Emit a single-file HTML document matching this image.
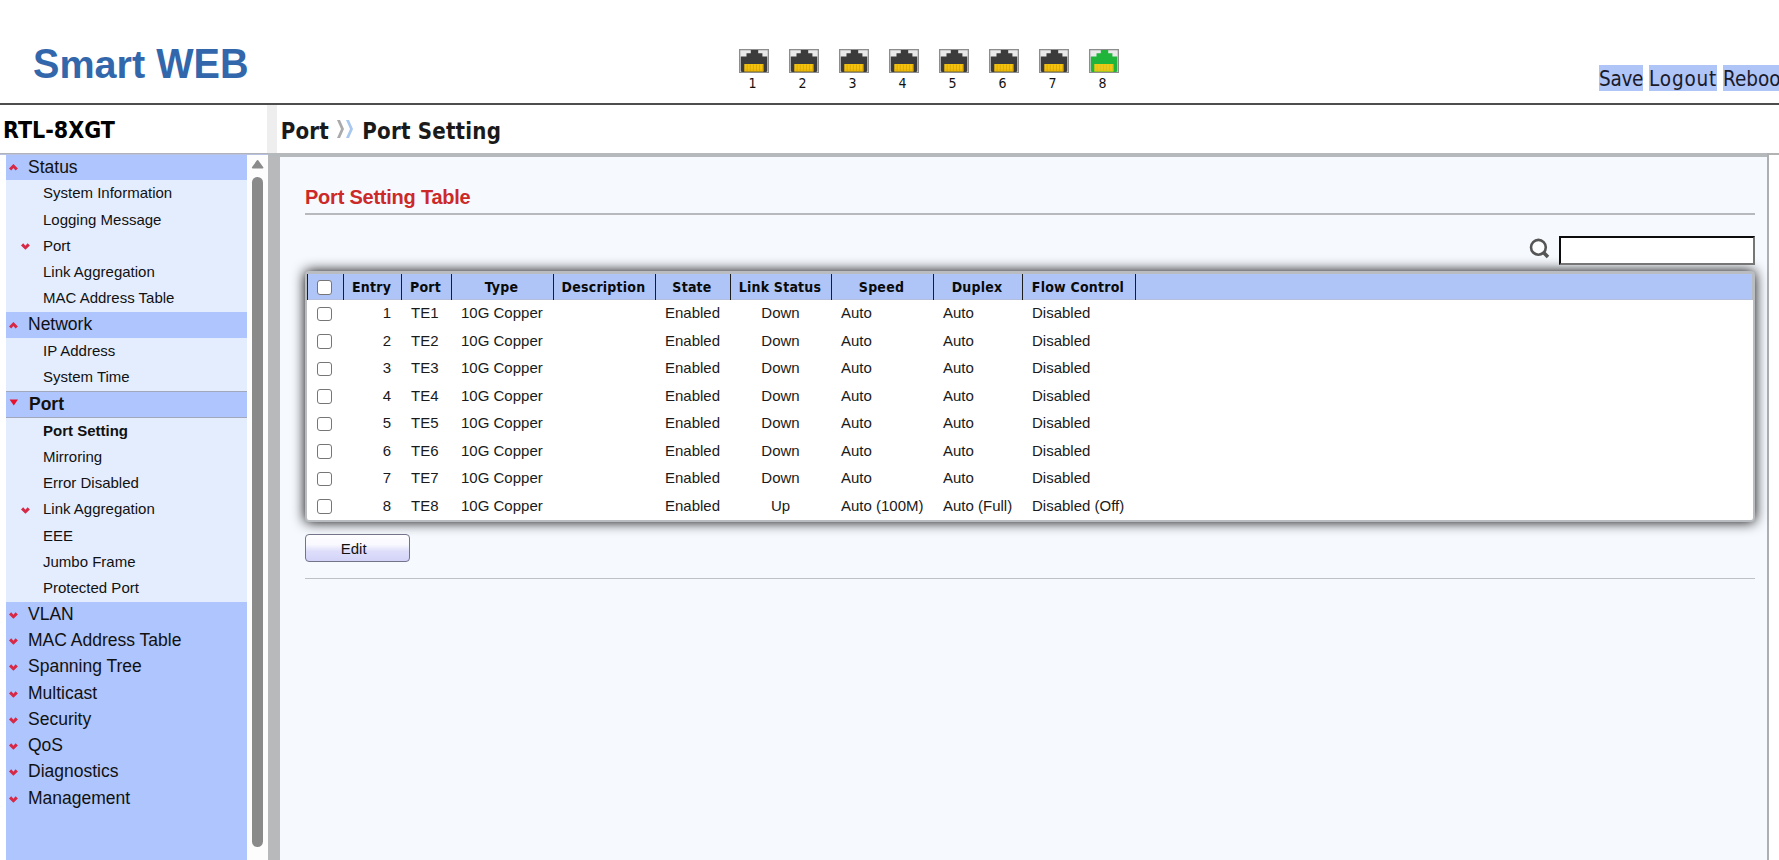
<!DOCTYPE html>
<html><head><meta charset="utf-8"><title>Port Setting</title>
<style>
html,body{margin:0;padding:0;}
body{width:1779px;height:860px;overflow:hidden;position:relative;background:#fff;font-family:"Liberation Sans",Arial,sans-serif;color:#111;}
.abs{position:absolute;}
.seg{font-family:"DejaVu Sans Condensed","DejaVu Sans","Liberation Sans",sans-serif;}
#logo{left:33px;top:41px;font-size:39.6px;font-weight:bold;color:#3367ab;line-height:46px;white-space:nowrap;}
#logo .cp{display:inline-block;transform:scaleY(1.075);transform-origin:0 36.7px;}
#hline{left:0;top:103px;width:1779px;height:2px;background:#4d4d4d;}
.pt{position:absolute;top:49px;width:30px;height:24px;}
.pn{position:absolute;top:74.1px;width:30px;text-align:center;font-size:14px;line-height:18px;color:#111;margin-left:0.5px;}
#links a{display:block;text-decoration:none;position:absolute;top:65px;height:26px;line-height:29.6px;overflow:hidden;font-size:20.5px;background:#afc4f7;color:#1a1a2a;white-space:nowrap;}
#model{left:3px;top:112.9px;font-size:23px;font-weight:bold;line-height:34px;color:#000;}
#crumb{left:280.7px;top:113.5px;font-size:22.1px;letter-spacing:0.2px;font-weight:bold;line-height:34px;color:#1a1a1a;white-space:nowrap;}

#sideline{left:0;top:153px;width:268px;height:2px;background:linear-gradient(#b0b4ba 0%,#b0b4ba 50%,#b8c2e0 50%,#b8c2e0 100%);z-index:3;}
#side{left:6px;top:154px;width:241px;height:706px;background:#afc5fd;overflow:hidden;}
.m{height:26.3px;line-height:25.5px;font-size:17.5px;padding-left:22px;position:relative;background:#afc5fd;color:#111;white-space:nowrap;}
.s{height:26.3px;line-height:26.3px;font-size:15px;padding-left:37px;position:relative;background:#e4edfe;color:#111;white-space:nowrap;}
.m.act{height:26.9px;line-height:27.2px;font-weight:bold;box-shadow:inset 0 1px 0 #a2a8bb, inset 0 -1px 0 #a2a8bb;padding-left:23px;}
.s.act{font-weight:bold;}
.m svg{position:absolute;left:3px;top:10px;}
.m.act svg{top:8.7px;left:3.4px;}
.s svg{position:absolute;left:15px;top:10.5px;}
#sbar{left:247px;top:154px;width:21px;height:706px;background:#fdfdfd;}
#sbar .up{position:absolute;left:3px;top:4px;}
#sbar .th{position:absolute;left:5px;top:23px;width:11px;height:670px;border-radius:6px;background:#8a8a8a;}
#split1{left:267px;top:105px;width:10px;height:48px;background:#eeeeee;}
#split2{left:268px;top:157px;width:12px;height:703px;background:#b8b9bb;}

#ptop{left:268px;top:153px;width:1501px;height:4px;background:#b5b9bc;}
#ptop2{left:1769px;top:153px;width:10px;height:2px;background:#b3b3b3;}
#pright{left:1767px;top:153px;width:2px;height:707px;background:#aeafb1;}
#panel{left:280px;top:157px;width:1487px;height:703px;background:#f6f9fe;}
#ttl{left:305px;top:184px;font-size:20px;letter-spacing:-0.23px;font-weight:bold;color:#cc2929;line-height:26px;white-space:nowrap;}
#hr1{left:305px;top:213px;width:1450px;height:2px;background:#b7b9bc;}
#hr2{left:305px;top:578px;width:1450px;height:1px;background:#bfc1c4;}
#sic{left:1528px;top:237px;z-index:2;}
#sin{z-index:2;box-sizing:content-box;margin:0;padding:0;outline:0;border-radius:0;font:inherit;left:1559px;top:236px;width:192px;height:25px;background:#fff;border-style:solid;border-width:2px;border-color:#0c0c0c #767676 #767676 #0c0c0c;}
#tbl{left:305px;top:271px;width:1446px;height:246px;background:#fff;border:2px solid #b9bcc0;border-top-width:3px;border-radius:4px;box-shadow:0 0 12.5px #000;}
#tbl table{border-collapse:separate;border-spacing:0;table-layout:fixed;width:1446px;margin:0;}
#tbl th{box-sizing:border-box;height:26px;padding:0.8px 2px 0 0;line-height:25px;border-left:1px solid #1d1d1d;background:#afc5f8;box-shadow:inset 0 -1px 0 #b3bfdc;font-family:"DejaVu Sans Condensed","DejaVu Sans","Liberation Sans",sans-serif;font-weight:bold;font-size:14px;letter-spacing:0.22px;color:#0a0a0a;text-align:center;white-space:nowrap;vertical-align:top;overflow:hidden;}
#tbl th:last-child{border-right:1px solid #b9bcc0;}
#tbl td{box-sizing:border-box;height:27.5px;padding:0 0 0 10px;line-height:26.3px;font-size:15px;color:#1a1a1a;text-align:left;white-space:nowrap;vertical-align:top;overflow:hidden;}
#tbl td.c{padding:0;text-align:center;}
#tbl td.rt{padding:0 10px 0 0;text-align:right;}
#tbl td.k,#tbl th:first-child{padding:0;}
.cb{-webkit-appearance:none;appearance:none;display:block;box-sizing:content-box;width:12.7px;height:12.7px;margin:6.5px 0 0 10px;border:1px solid #767676;border-radius:3px;background:#fff;}
.cb.hc{margin:6px 0 0 9px;}
#edit{margin:0;font-family:inherit;cursor:pointer;left:305px;top:534px;width:103px;height:26px;border:1px solid #73738a;border-radius:4px;background:linear-gradient(#fefeff 0%,#f8f8ff 38%,#dedefb 62%,#d3d3f8 100%);font-size:15px;line-height:27.4px;text-align:center;color:#111;box-sizing:border-box;padding:0.4px 7.6px 0 0;width:105px;height:28px;}
</style></head><body>
<div id="logo" class="abs"><span class="cp">S</span>mart <span class="cp">WEB</span></div>
<svg class="pt" style="left:739px" width="30" height="24" viewBox="0 0 30 24"><rect x="0" y="0" width="30" height="24" fill="#8d8d8d"/><rect x="1.3" y="1.3" width="27.4" height="21.6" fill="#e9e9e9"/><path d="M11.8 1 H19.2 V4.2 H23.4 V7.5 H28.2 V21.5 Q28.2 23 26.7 23 H3.3 Q1.8 23 1.8 21.5 V7.5 H7.5 V4.2 H11.8z" fill="#3b3b3b"/><rect x="5.3" y="15" width="19.2" height="7.6" fill="#f2c20f"/><rect x="7.7" y="15.6" width="0.9" height="6.4" fill="#e0a800"/><rect x="10.8" y="15.6" width="0.9" height="6.4" fill="#e0a800"/><rect x="13.9" y="15.6" width="0.9" height="6.4" fill="#e0a800"/><rect x="17.0" y="15.6" width="0.9" height="6.4" fill="#e0a800"/><rect x="20.1" y="15.6" width="0.9" height="6.4" fill="#e0a800"/><rect x="23.2" y="15.6" width="0.9" height="6.4" fill="#e0a800"/><rect x="5.3" y="20.6" width="19.2" height="0.8" fill="#e0a800" opacity=".7"/></svg><div class="pn seg" style="left:737px">1</div>
<svg class="pt" style="left:789px" width="30" height="24" viewBox="0 0 30 24"><rect x="0" y="0" width="30" height="24" fill="#8d8d8d"/><rect x="1.3" y="1.3" width="27.4" height="21.6" fill="#e9e9e9"/><path d="M11.8 1 H19.2 V4.2 H23.4 V7.5 H28.2 V21.5 Q28.2 23 26.7 23 H3.3 Q1.8 23 1.8 21.5 V7.5 H7.5 V4.2 H11.8z" fill="#3b3b3b"/><rect x="5.3" y="15" width="19.2" height="7.6" fill="#f2c20f"/><rect x="7.7" y="15.6" width="0.9" height="6.4" fill="#e0a800"/><rect x="10.8" y="15.6" width="0.9" height="6.4" fill="#e0a800"/><rect x="13.9" y="15.6" width="0.9" height="6.4" fill="#e0a800"/><rect x="17.0" y="15.6" width="0.9" height="6.4" fill="#e0a800"/><rect x="20.1" y="15.6" width="0.9" height="6.4" fill="#e0a800"/><rect x="23.2" y="15.6" width="0.9" height="6.4" fill="#e0a800"/><rect x="5.3" y="20.6" width="19.2" height="0.8" fill="#e0a800" opacity=".7"/></svg><div class="pn seg" style="left:787px">2</div>
<svg class="pt" style="left:839px" width="30" height="24" viewBox="0 0 30 24"><rect x="0" y="0" width="30" height="24" fill="#8d8d8d"/><rect x="1.3" y="1.3" width="27.4" height="21.6" fill="#e9e9e9"/><path d="M11.8 1 H19.2 V4.2 H23.4 V7.5 H28.2 V21.5 Q28.2 23 26.7 23 H3.3 Q1.8 23 1.8 21.5 V7.5 H7.5 V4.2 H11.8z" fill="#3b3b3b"/><rect x="5.3" y="15" width="19.2" height="7.6" fill="#f2c20f"/><rect x="7.7" y="15.6" width="0.9" height="6.4" fill="#e0a800"/><rect x="10.8" y="15.6" width="0.9" height="6.4" fill="#e0a800"/><rect x="13.9" y="15.6" width="0.9" height="6.4" fill="#e0a800"/><rect x="17.0" y="15.6" width="0.9" height="6.4" fill="#e0a800"/><rect x="20.1" y="15.6" width="0.9" height="6.4" fill="#e0a800"/><rect x="23.2" y="15.6" width="0.9" height="6.4" fill="#e0a800"/><rect x="5.3" y="20.6" width="19.2" height="0.8" fill="#e0a800" opacity=".7"/></svg><div class="pn seg" style="left:837px">3</div>
<svg class="pt" style="left:889px" width="30" height="24" viewBox="0 0 30 24"><rect x="0" y="0" width="30" height="24" fill="#8d8d8d"/><rect x="1.3" y="1.3" width="27.4" height="21.6" fill="#e9e9e9"/><path d="M11.8 1 H19.2 V4.2 H23.4 V7.5 H28.2 V21.5 Q28.2 23 26.7 23 H3.3 Q1.8 23 1.8 21.5 V7.5 H7.5 V4.2 H11.8z" fill="#3b3b3b"/><rect x="5.3" y="15" width="19.2" height="7.6" fill="#f2c20f"/><rect x="7.7" y="15.6" width="0.9" height="6.4" fill="#e0a800"/><rect x="10.8" y="15.6" width="0.9" height="6.4" fill="#e0a800"/><rect x="13.9" y="15.6" width="0.9" height="6.4" fill="#e0a800"/><rect x="17.0" y="15.6" width="0.9" height="6.4" fill="#e0a800"/><rect x="20.1" y="15.6" width="0.9" height="6.4" fill="#e0a800"/><rect x="23.2" y="15.6" width="0.9" height="6.4" fill="#e0a800"/><rect x="5.3" y="20.6" width="19.2" height="0.8" fill="#e0a800" opacity=".7"/></svg><div class="pn seg" style="left:887px">4</div>
<svg class="pt" style="left:939px" width="30" height="24" viewBox="0 0 30 24"><rect x="0" y="0" width="30" height="24" fill="#8d8d8d"/><rect x="1.3" y="1.3" width="27.4" height="21.6" fill="#e9e9e9"/><path d="M11.8 1 H19.2 V4.2 H23.4 V7.5 H28.2 V21.5 Q28.2 23 26.7 23 H3.3 Q1.8 23 1.8 21.5 V7.5 H7.5 V4.2 H11.8z" fill="#3b3b3b"/><rect x="5.3" y="15" width="19.2" height="7.6" fill="#f2c20f"/><rect x="7.7" y="15.6" width="0.9" height="6.4" fill="#e0a800"/><rect x="10.8" y="15.6" width="0.9" height="6.4" fill="#e0a800"/><rect x="13.9" y="15.6" width="0.9" height="6.4" fill="#e0a800"/><rect x="17.0" y="15.6" width="0.9" height="6.4" fill="#e0a800"/><rect x="20.1" y="15.6" width="0.9" height="6.4" fill="#e0a800"/><rect x="23.2" y="15.6" width="0.9" height="6.4" fill="#e0a800"/><rect x="5.3" y="20.6" width="19.2" height="0.8" fill="#e0a800" opacity=".7"/></svg><div class="pn seg" style="left:937px">5</div>
<svg class="pt" style="left:989px" width="30" height="24" viewBox="0 0 30 24"><rect x="0" y="0" width="30" height="24" fill="#8d8d8d"/><rect x="1.3" y="1.3" width="27.4" height="21.6" fill="#e9e9e9"/><path d="M11.8 1 H19.2 V4.2 H23.4 V7.5 H28.2 V21.5 Q28.2 23 26.7 23 H3.3 Q1.8 23 1.8 21.5 V7.5 H7.5 V4.2 H11.8z" fill="#3b3b3b"/><rect x="5.3" y="15" width="19.2" height="7.6" fill="#f2c20f"/><rect x="7.7" y="15.6" width="0.9" height="6.4" fill="#e0a800"/><rect x="10.8" y="15.6" width="0.9" height="6.4" fill="#e0a800"/><rect x="13.9" y="15.6" width="0.9" height="6.4" fill="#e0a800"/><rect x="17.0" y="15.6" width="0.9" height="6.4" fill="#e0a800"/><rect x="20.1" y="15.6" width="0.9" height="6.4" fill="#e0a800"/><rect x="23.2" y="15.6" width="0.9" height="6.4" fill="#e0a800"/><rect x="5.3" y="20.6" width="19.2" height="0.8" fill="#e0a800" opacity=".7"/></svg><div class="pn seg" style="left:987px">6</div>
<svg class="pt" style="left:1039px" width="30" height="24" viewBox="0 0 30 24"><rect x="0" y="0" width="30" height="24" fill="#8d8d8d"/><rect x="1.3" y="1.3" width="27.4" height="21.6" fill="#e9e9e9"/><path d="M11.8 1 H19.2 V4.2 H23.4 V7.5 H28.2 V21.5 Q28.2 23 26.7 23 H3.3 Q1.8 23 1.8 21.5 V7.5 H7.5 V4.2 H11.8z" fill="#3b3b3b"/><rect x="5.3" y="15" width="19.2" height="7.6" fill="#f2c20f"/><rect x="7.7" y="15.6" width="0.9" height="6.4" fill="#e0a800"/><rect x="10.8" y="15.6" width="0.9" height="6.4" fill="#e0a800"/><rect x="13.9" y="15.6" width="0.9" height="6.4" fill="#e0a800"/><rect x="17.0" y="15.6" width="0.9" height="6.4" fill="#e0a800"/><rect x="20.1" y="15.6" width="0.9" height="6.4" fill="#e0a800"/><rect x="23.2" y="15.6" width="0.9" height="6.4" fill="#e0a800"/><rect x="5.3" y="20.6" width="19.2" height="0.8" fill="#e0a800" opacity=".7"/></svg><div class="pn seg" style="left:1037px">7</div>
<svg class="pt" style="left:1089px" width="30" height="24" viewBox="0 0 30 24"><rect x="0" y="0" width="30" height="24" fill="#8d8d8d"/><rect x="1.3" y="1.3" width="27.4" height="21.6" fill="#e9e9e9"/><path d="M11.8 1 H19.2 V4.2 H23.4 V7.5 H28.2 V21.5 Q28.2 23 26.7 23 H3.3 Q1.8 23 1.8 21.5 V7.5 H7.5 V4.2 H11.8z" fill="#1fb53a"/><rect x="5.3" y="15" width="19.2" height="7.6" fill="#f0c814"/><rect x="7.7" y="15.6" width="0.9" height="6.4" fill="#d8c020"/><rect x="10.8" y="15.6" width="0.9" height="6.4" fill="#d8c020"/><rect x="13.9" y="15.6" width="0.9" height="6.4" fill="#d8c020"/><rect x="17.0" y="15.6" width="0.9" height="6.4" fill="#d8c020"/><rect x="20.1" y="15.6" width="0.9" height="6.4" fill="#d8c020"/><rect x="23.2" y="15.6" width="0.9" height="6.4" fill="#d8c020"/><rect x="5.3" y="20.6" width="19.2" height="0.8" fill="#d8c020" opacity=".7"/></svg><div class="pn seg" style="left:1087px">8</div>
<div id="hline" class="abs"></div>
<div id="links" class="seg"><a style="left:1599px;width:44px;letter-spacing:-0.3px">Save</a><a style="left:1649px;width:68px;letter-spacing:0.85px">Logout</a><a style="left:1723px;width:70px;">Reboot</a></div>
<div id="model" class="abs seg">RTL-8XGT</div>
<div id="crumb" class="abs seg">Port <svg width="20" height="20" viewBox="0 0 20 20" style="vertical-align:-0.8px;margin-right:-1px"><path d="M1 1h3l4 9-4 9H1l4-9z" fill="#aaa"/><path d="M10 1h3l4 9-4 9h-3l4-9z" fill="#a9c8f0"/></svg> Port Setting</div>
<div id="panel" class="abs"></div>
<div id="ptop" class="abs"></div><div id="ptop2" class="abs"></div><div id="pright" class="abs"></div>
<div id="ttl" class="abs">Port Setting Table</div>
<div id="hr1" class="abs"></div>
<svg id="sic" class="abs" width="22" height="22" viewBox="0 0 22 22"><circle cx="10.4" cy="10.3" r="7.4" fill="#fbfcfe" stroke="#555" stroke-width="2.6"/><path d="M15.6 15.6 L20 20" stroke="#555" stroke-width="3.6" stroke-linecap="butt"/></svg>
<input id="sin" class="abs" type="text" value="">
<div id="tbl" class="abs">
<table>
<colgroup><col style="width:36px"><col style="width:58px"><col style="width:50px"><col style="width:102px"><col style="width:102px"><col style="width:75px"><col style="width:101px"><col style="width:102px"><col style="width:89px"><col style="width:113px"><col style="width:618px"></colgroup>
<thead><tr><th><input type="checkbox" class="cb hc"></th><th>Entry</th><th>Port</th><th>Type</th><th>Description</th><th>State</th><th>Link Status</th><th>Speed</th><th>Duplex</th><th>Flow Control</th><th></th></tr></thead>
<tbody>
<tr><td class="k"><input type="checkbox" class="cb"></td><td class="rt">1</td><td>TE1</td><td>10G Copper</td><td></td><td class="c">Enabled</td><td class="c">Down</td><td>Auto</td><td>Auto</td><td>Disabled</td><td></td></tr>
<tr><td class="k"><input type="checkbox" class="cb"></td><td class="rt">2</td><td>TE2</td><td>10G Copper</td><td></td><td class="c">Enabled</td><td class="c">Down</td><td>Auto</td><td>Auto</td><td>Disabled</td><td></td></tr>
<tr><td class="k"><input type="checkbox" class="cb"></td><td class="rt">3</td><td>TE3</td><td>10G Copper</td><td></td><td class="c">Enabled</td><td class="c">Down</td><td>Auto</td><td>Auto</td><td>Disabled</td><td></td></tr>
<tr><td class="k"><input type="checkbox" class="cb"></td><td class="rt">4</td><td>TE4</td><td>10G Copper</td><td></td><td class="c">Enabled</td><td class="c">Down</td><td>Auto</td><td>Auto</td><td>Disabled</td><td></td></tr>
<tr><td class="k"><input type="checkbox" class="cb"></td><td class="rt">5</td><td>TE5</td><td>10G Copper</td><td></td><td class="c">Enabled</td><td class="c">Down</td><td>Auto</td><td>Auto</td><td>Disabled</td><td></td></tr>
<tr><td class="k"><input type="checkbox" class="cb"></td><td class="rt">6</td><td>TE6</td><td>10G Copper</td><td></td><td class="c">Enabled</td><td class="c">Down</td><td>Auto</td><td>Auto</td><td>Disabled</td><td></td></tr>
<tr><td class="k"><input type="checkbox" class="cb"></td><td class="rt">7</td><td>TE7</td><td>10G Copper</td><td></td><td class="c">Enabled</td><td class="c">Down</td><td>Auto</td><td>Auto</td><td>Disabled</td><td></td></tr>
<tr><td class="k"><input type="checkbox" class="cb"></td><td class="rt">8</td><td>TE8</td><td>10G Copper</td><td></td><td class="c">Enabled</td><td class="c">Up</td><td>Auto (100M)</td><td>Auto (Full)</td><td>Disabled (Off)</td><td></td></tr>
</tbody>
</table>
</div>
<button id="edit" class="abs" type="button">Edit</button>
<div id="hr2" class="abs"></div>
<div id="sideline" class="abs"></div>
<div id="side" class="abs">
<div class="m" style="line-height:26.6px"><svg width="10" height="7" viewBox="0 0 10 7"><path d="M4.4 0.1 L8.9 4.4 L6.6 6.6 L4.4 4 L2.2 6.6 L0 4.4z" fill="#d72846"/></svg>Status</div>
<div class="s">System Information</div>
<div class="s">Logging Message</div>
<div class="s"><svg width="10" height="7" viewBox="0 0 10 7"><path d="M4.4 6.7 L8.9 2.4 L6.6 0.2 L4.4 2.8 L2.2 0.2 L0 2.4z" fill="#d72846"/></svg>Port</div>
<div class="s">Link Aggregation</div>
<div class="s">MAC Address Table</div>
<div class="m"><svg width="10" height="7" viewBox="0 0 10 7"><path d="M4.4 0.1 L8.9 4.4 L6.6 6.6 L4.4 4 L2.2 6.6 L0 4.4z" fill="#d72846"/></svg>Network</div>
<div class="s">IP Address</div>
<div class="s">System Time</div>
<div class="m act"><svg width="10" height="7" viewBox="0 0 10 7"><path d="M0.6 0.5 H9 L4.8 6.5z" fill="#e8112d"/></svg>Port</div>
<div class="s act">Port Setting</div>
<div class="s">Mirroring</div>
<div class="s">Error Disabled</div>
<div class="s"><svg width="10" height="7" viewBox="0 0 10 7"><path d="M4.4 6.7 L8.9 2.4 L6.6 0.2 L4.4 2.8 L2.2 0.2 L0 2.4z" fill="#d72846"/></svg>Link Aggregation</div>
<div class="s">EEE</div>
<div class="s">Jumbo Frame</div>
<div class="s">Protected Port</div>
<div class="m"><svg width="10" height="7" viewBox="0 0 10 7"><path d="M4.4 6.7 L8.9 2.4 L6.6 0.2 L4.4 2.8 L2.2 0.2 L0 2.4z" fill="#d72846"/></svg>VLAN</div>
<div class="m"><svg width="10" height="7" viewBox="0 0 10 7"><path d="M4.4 6.7 L8.9 2.4 L6.6 0.2 L4.4 2.8 L2.2 0.2 L0 2.4z" fill="#d72846"/></svg>MAC Address Table</div>
<div class="m"><svg width="10" height="7" viewBox="0 0 10 7"><path d="M4.4 6.7 L8.9 2.4 L6.6 0.2 L4.4 2.8 L2.2 0.2 L0 2.4z" fill="#d72846"/></svg>Spanning Tree</div>
<div class="m"><svg width="10" height="7" viewBox="0 0 10 7"><path d="M4.4 6.7 L8.9 2.4 L6.6 0.2 L4.4 2.8 L2.2 0.2 L0 2.4z" fill="#d72846"/></svg>Multicast</div>
<div class="m"><svg width="10" height="7" viewBox="0 0 10 7"><path d="M4.4 6.7 L8.9 2.4 L6.6 0.2 L4.4 2.8 L2.2 0.2 L0 2.4z" fill="#d72846"/></svg>Security</div>
<div class="m"><svg width="10" height="7" viewBox="0 0 10 7"><path d="M4.4 6.7 L8.9 2.4 L6.6 0.2 L4.4 2.8 L2.2 0.2 L0 2.4z" fill="#d72846"/></svg>QoS</div>
<div class="m"><svg width="10" height="7" viewBox="0 0 10 7"><path d="M4.4 6.7 L8.9 2.4 L6.6 0.2 L4.4 2.8 L2.2 0.2 L0 2.4z" fill="#d72846"/></svg>Diagnostics</div>
<div class="m"><svg width="10" height="7" viewBox="0 0 10 7"><path d="M4.4 6.7 L8.9 2.4 L6.6 0.2 L4.4 2.8 L2.2 0.2 L0 2.4z" fill="#d72846"/></svg>Management</div>
</div>
<div id="sbar" class="abs"><svg class="up" width="15" height="12" viewBox="0 0 15 12"><path d="M2.6 9.6 L7.6 2.8 L12.6 9.6z" fill="#8b8b8b" stroke="#8b8b8b" stroke-width="1.6" stroke-linejoin="round"/></svg><div class="th"></div></div>
<div id="split1" class="abs"></div>
<div id="split2" class="abs"></div>
</body></html>
